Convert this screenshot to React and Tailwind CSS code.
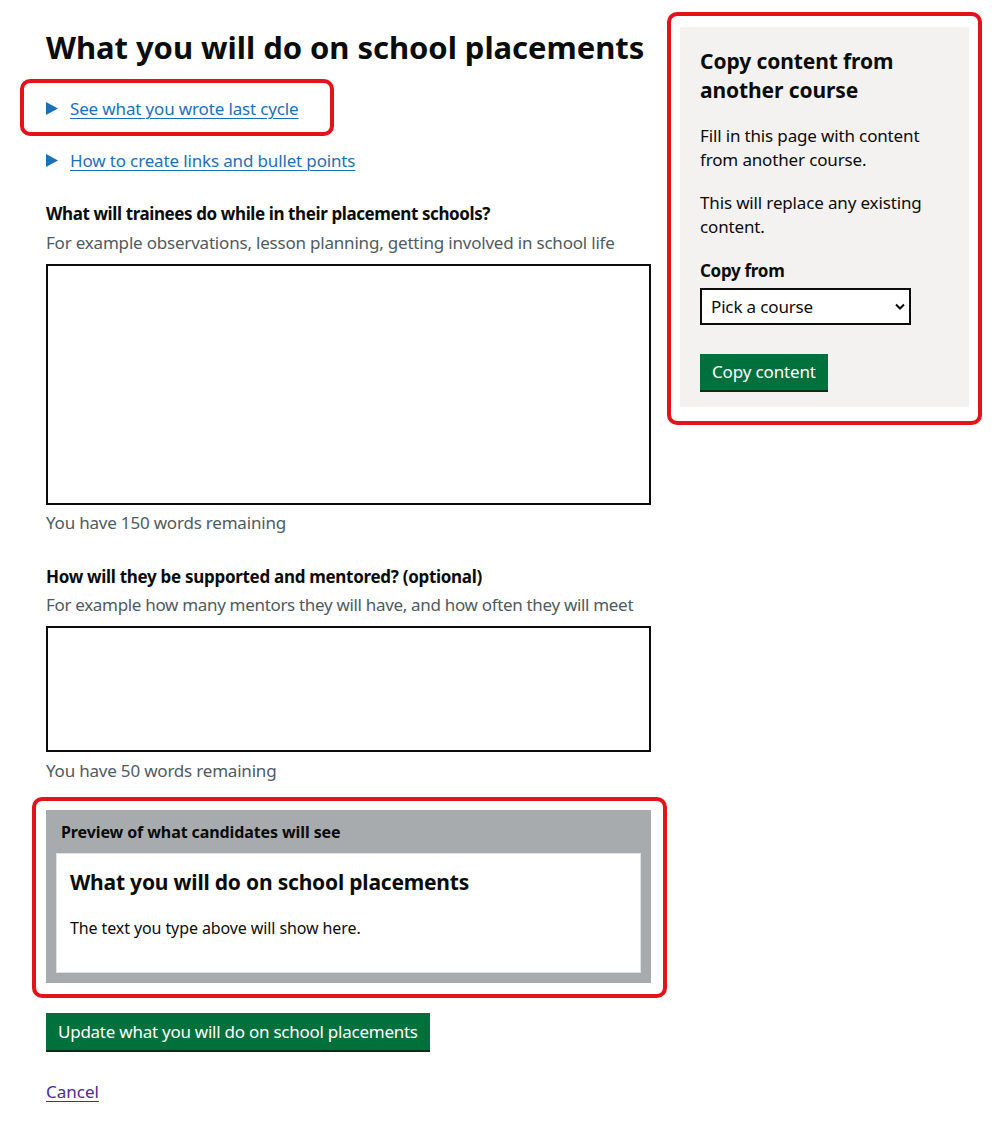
import React from "react";

const font = { fontFamily: '"Noto Sans", Arial, sans-serif' };

function Triangle() {
  return (
    <svg width="12" height="13" viewBox="0 0 12 13" className="shrink-0">
      <polygon points="0,0 12,6.5 0,13" fill="#1d70b8" />
    </svg>
  );
}

function Summary({ children, className = "" }) {
  return (
    <div className={"flex items-center h-[25px] " + className}>
      <Triangle />
      <a href="#" className="ml-[12px] text-[17px] leading-[25px] tracking-[-0.15px] whitespace-nowrap text-[#1d70b8] underline decoration-1 underline-offset-[3px]">
        {children}
      </a>
    </div>
  );
}

function RedBox({ className }) {
  return <div className={"absolute border-[4px] border-[#e4131b] rounded-[10px] pointer-events-none " + className} />;
}

export default function App() {
  return (
    <div className="relative w-[998px] h-[1122px] overflow-hidden bg-white text-[#0b0c0c]" style={font}>
      <div className="flex pl-[46px]">
        {/* Left column */}
        <div className="w-[605px] pt-[27px]">
          <h1 className="text-[31px] leading-[40px] font-bold tracking-[-0.05px] whitespace-nowrap">What you will do on school placements</h1>
          <Summary className="mt-[29px]">See what you wrote last cycle</Summary>
          <Summary className="mt-[27px]">How to create links and bullet points</Summary>

          <div className="mt-[28px] text-[17px] leading-[25px] font-bold tracking-[-0.4px] whitespace-nowrap">What will trainees do while in their placement schools?</div>
          <div className="mt-[4px] text-[17px] leading-[25px] tracking-[-0.2px] whitespace-nowrap text-[#505a5f]">For example observations, lesson planning, getting involved in school life</div>
          <div className="mt-[9px] h-[241px] border-2 border-[#0b0c0c] bg-white" />
          <div className="mt-[5px] text-[17px] leading-[25px] tracking-[-0.2px] text-[#505a5f]">You have 150 words remaining</div>

          <div className="mt-[29px] text-[17px] leading-[25px] font-bold tracking-[-0.3px] whitespace-nowrap">How will they be supported and mentored? (optional)</div>
          <div className="mt-[3px] text-[17px] leading-[25px] tracking-[-0.32px] whitespace-nowrap text-[#505a5f]">For example how many mentors they will have, and how often they will meet</div>
          <div className="mt-[9px] h-[126px] border-2 border-[#0b0c0c] bg-white" />
          <div className="mt-[6px] text-[17px] leading-[25px] tracking-[-0.2px] text-[#505a5f]">You have 50 words remaining</div>

          <div className="mt-[27px] bg-[#a8abad] px-[10px] pt-[12px] pb-[10px]">
            <div className="pl-[5px] text-[16px] leading-[20px] font-bold tracking-[-0.1px]">Preview of what candidates will see</div>
            <div className="mt-[11px] bg-white border border-[#dfe1e2] pl-[13px] pt-[13px] pb-[34px]">
              <div className="text-[21px] leading-[30px] font-bold tracking-[-0.2px]">What you will do on school placements</div>
              <div className="mt-[21px] text-[16px] leading-[20px] tracking-[-0.1px]">The text you type above will show here.</div>
            </div>
          </div>

          <button className="mt-[30px] h-[37px] px-[12px] bg-[#00703c] text-white text-[17px] leading-[25px] tracking-[-0.25px] shadow-[0_2px_0_#002d18]">
            Update what you will do on school placements
          </button>

          <div className="mt-[29px]">
            <a href="#" className="text-[17px] leading-[25px] text-[#4c2c92] underline decoration-1 underline-offset-[3px]">Cancel</a>
          </div>
        </div>

        {/* Right column */}
        <div className="ml-[29px] mt-[27px] w-[289px] self-start bg-[#f3f2f1] px-[20px] pt-[20px] pb-[17px]">
          <h2 className="text-[21px] leading-[29px] font-bold tracking-[-0.1px]">Copy content from another course</h2>
          <p className="mt-[19px] text-[17px] leading-[24px] tracking-[-0.15px]">Fill in this page with content from another course.</p>
          <p className="mt-[19px] text-[17px] leading-[24px] tracking-[-0.15px]">This will replace any existing content.</p>
          <div className="mt-[20px] text-[17px] leading-[24px] font-bold tracking-[-0.3px]">Copy from</div>
          <div className="mt-[5px] relative w-[211px] h-[37px] border-2 border-[#0b0c0c] bg-white flex items-center pl-[9px]">
            <span className="text-[17px] leading-[24px] tracking-[-0.15px]">Pick a course</span>
            <svg width="10" height="7" viewBox="0 0 10 7" className="absolute right-[4px] top-[13px]">
              <path d="M1 1.5 L5 5.5 L9 1.5" stroke="#0b0c0c" strokeWidth="2" fill="none" />
            </svg>
          </div>
          <button className="mt-[29px] h-[36px] px-[12px] bg-[#00703c] text-white text-[17px] leading-[24px] tracking-[-0.15px] shadow-[0_2px_0_#002d18]">
            Copy content
          </button>
        </div>
      </div>

      <RedBox className="left-[20px] top-[79px] w-[314px] h-[57px]" />
      <RedBox className="left-[667px] top-[12px] w-[315px] h-[413px]" />
      <RedBox className="left-[32px] top-[797px] w-[635px] h-[201px]" />
    </div>
  );
}
